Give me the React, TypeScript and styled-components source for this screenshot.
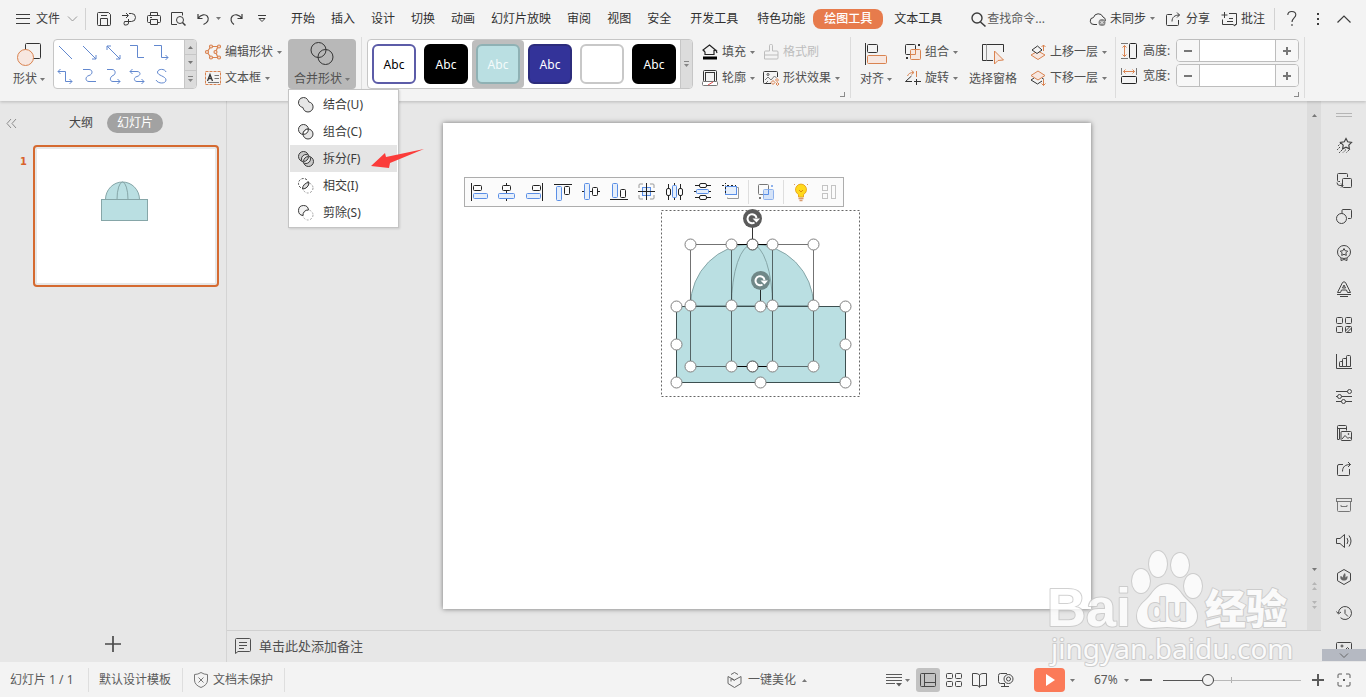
import React from "react";
import styled, { createGlobalStyle, css } from "styled-components";

const ORANGE = "#d98350";
const ORANGE_TINT = "#f7e7e0";
const BLUE = "#5a8fe6";
const BLUE_TINT = "#e6effb";
const SHAPE = "#badfe2";
const SHAPE_LINE = "#86a6a8";

const GlobalStyle = createGlobalStyle`
  *, *::before, *::after { box-sizing: border-box; }
  html, body { margin: 0; padding: 0; }
  body {
    font-family: "Noto Sans", "Noto Sans CJK SC", sans-serif;
    font-size: 12px;
    line-height: 16px;
    color: #505050;
    overflow: hidden;
  }
  button, input {
    font: inherit;
    color: inherit;
    background: none;
    border: 0;
    margin: 0;
    padding: 0;
  }
`;

/* ---------- frame ---------- */

const Window = styled.div`
  position: relative;
  display: flex;
  flex-direction: column;
  height: 100vh;
  background: #e7e7e7;
  white-space: nowrap;
`;

const Header = styled.header`
  position: relative;
  z-index: 2;
  background: #f3f3f3;
  box-shadow: 0 1px 3px rgba(0, 0, 0, 0.2);
`;

const Body = styled.div`
  flex: 1;
  min-height: 0;
  display: flex;
`;

const Svg = styled.svg`
  display: block;
  flex: none;
  fill: none;
  stroke: currentColor;
  overflow: visible;
`;

const CaretShape = styled(Svg)`
  fill: #777;
  stroke: none;
`;

const Caret = ({ up = false }: { up?: boolean }) => (
  <CaretShape width="5" height="3" viewBox="0 0 5 3">
    <path d={up ? "M0 3h5L2.500 0z" : "M0 0h5L2.500 3z"} />
  </CaretShape>
);

type IconProps = { w?: number; h?: number; children: React.ReactNode };
const Icon = ({ w = 16, h = 16, children }: IconProps) => (
  <Svg width={w} height={h} viewBox={`0 0 ${w} ${h}`} aria-hidden="true">
    {children}
  </Svg>
);

const Divider = styled.span<{ $gap: string }>`
  width: 1px;
  height: 22px;
  margin: ${(p) => p.$gap};
  background: #d2d2d2;
`;

/* ---------- title bar ---------- */

const TitleBar = styled.div`
  display: flex;
  align-items: center;
  height: 37px;
  padding-right: 9px;
  color: #3c3c3c;
`;

const FileButton = styled.button`
  display: flex;
  align-items: center;
  padding: 0 8px;
  margin-left: 8px;
  gap: 6px;
`;

const QuickButton = styled.button<{ $w?: number }>`
  display: flex;
  align-items: center;
  justify-content: ${(p) => (p.$w === 8 ? "flex-start" : "center")};
  width: ${(p) => p.$w ?? 25}px;
  height: 24px;
`;

const Tabs = styled.nav`
  display: flex;
  align-items: center;
  margin-left: 9px;
`;

const Tab = styled.button<{ $active?: boolean; $spaced?: boolean }>`
  height: 20px;
  padding: 0 8px;
  margin-left: ${(p) => (p.$spaced ? 3 : 0)}px;
  color: #303030;
  ${(p) =>
    p.$active &&
    css`
      padding: 0 11px;
      border-radius: 8px;
      background: #e77b4c;
      color: #fff;
      font-weight: 500;
    `}
`;

const Search = styled.label`
  display: flex;
  align-items: center;
  margin-left: 21px;
  gap: 1px;
`;

const SearchInput = styled.input`
  width: 72px;
  outline: none;
  &::placeholder {
    color: #5c5c5c;
    opacity: 1;
  }
`;

const Account = styled.div`
  display: flex;
  align-items: center;
  gap: 1px;
  margin-left: auto;
`;

const AccountButton = styled.button`
  display: flex;
  align-items: center;
  gap: 4px;
  padding: 0 5px;
`;

/* ---------- ribbon ---------- */

const Ribbon = styled.div`
  display: flex;
  height: 64px;
`;

const Group = styled.section<{ $pad: string; $gap?: number }>`
  position: relative;
  display: flex;
  align-items: flex-start;
  gap: ${(p) => p.$gap ?? 4}px;
  height: 61px;
  padding: ${(p) => p.$pad};
  border-right: 1px solid #dcdcdc;
`;

const CornerMark = styled.button`
  position: absolute;
  right: 5px;
  bottom: 1px;
  width: 5px;
  height: 5px;
  border: solid #8a8a8a;
  border-width: 0 1px 1px 0;
`;

const BigButton = styled.button<{ $pressed?: boolean; $w?: number }>`
  display: flex;
  flex-direction: column;
  align-items: center;
  gap: 5px;
  width: ${(p) => (p.$w ? `${p.$w}px` : "auto")};
  height: 50px;
  margin-top: 1px;
  padding: 3px 4px 0;
  border-radius: 4px;
  background: ${(p) => (p.$pressed ? "#b8b8b8" : "none")};
`;

const BigIcon = styled.span`
  display: flex;
  align-items: center;
  justify-content: center;
  height: 24px;
  color: #333;
`;

const BigLabel = styled.span`
  display: flex;
  align-items: center;
  gap: 3px;
`;

const Columns = styled.div`
  display: flex;
`;

const Column = styled.div`
  display: flex;
  flex-direction: column;
  margin-top: 1px;
`;

const Tool = styled.button<{ $off?: boolean }>`
  display: flex;
  align-items: center;
  gap: 4px;
  height: 26px;
  padding: 0 3px 0 5px;
  color: ${(p) => (p.$off ? "#bdbdbd" : "inherit")};
`;

const Gallery = styled.div`
  display: flex;
  height: 50px;
  margin-top: 1px;
  border: 1px solid #c6c6c6;
  border-radius: 4px;
  background: #fff;
  overflow: hidden;
`;

const LineGrid = styled.div`
  display: grid;
  grid-template-columns: repeat(5, 24px);
  grid-auto-rows: 24px;
  padding-right: 10px;
  color: #6288cf;
`;

const LineCell = styled.button`
  display: flex;
  align-items: center;
  justify-content: center;
  padding-right: 2px;
`;

const Stepper = styled.div`
  display: grid;
  width: 12px;
  border-left: 1px solid #c6c6c6;
  background: #dcdcdc;
`;

const StepperButton = styled.button`
  display: flex;
  align-items: center;
  justify-content: center;
  & + & {
    border-top: 1px solid #c6c6c6;
  }
`;

const Swatches = styled.div`
  display: flex;
  width: 312px;
`;

const SwatchCell = styled.button<{ $selected?: boolean }>`
  display: flex;
  align-items: center;
  justify-content: center;
  width: 52px;
  border-radius: 4px;
  background: ${(p) => (p.$selected ? "#bebebe" : "none")};
`;

const Swatch = styled.span<{ $bg: string; $line: string; $ink: string }>`
  width: 44px;
  height: 40px;
  border: 2px solid ${(p) => p.$line};
  border-radius: 6px;
  background: ${(p) => p.$bg};
  color: ${(p) => p.$ink};
  line-height: 38px;
`;

const MenuAnchor = styled.div`
  position: relative;
`;

const Menu = styled.div`
  position: absolute;
  top: 51px;
  left: 0;
  width: 111px;
  padding: 1px;
  border: 1px solid #c4c4c4;
  background: #fff;
  box-shadow: 1px 1px 2px rgba(0, 0, 0, 0.12);
`;

const MenuItem = styled.button<{ $hover?: boolean }>`
  position: relative;
  display: flex;
  align-items: center;
  gap: 9px;
  width: 100%;
  height: 27px;
  padding-left: 8px;
  color: #3a3a3a;
  background: ${(p) => (p.$hover ? "#e5e5e5" : "none")};
`;

const Pointer = styled(Svg)`
  position: absolute;
  top: 4px;
  left: 81px;
  fill: #fb3c3a;
  stroke: none;
`;

const SizeRows = styled.div`
  display: flex;
  flex-direction: column;
  gap: 2px;
  padding-top: 1px;
`;

const SizeRow = styled.div`
  display: flex;
  align-items: center;
  gap: 6px;
  height: 23px;
`;

const SizeLabel = styled.label`
  width: 27px;
`;

const Spin = styled.div`
  display: flex;
  width: 123px;
  height: 23px;
  border: 1px solid #bdbdbd;
  border-radius: 4px;
  background: #fff;
  overflow: hidden;
`;

const SpinButton = styled.button`
  display: flex;
  align-items: center;
  justify-content: center;
  width: 22px;
  background: #f7f7f7;
  color: #777;
`;

const SpinInput = styled.input`
  flex: 1;
  min-width: 0;
  border: solid #bdbdbd;
  border-width: 0 1px;
`;

/* ---------- slide list ---------- */

const SlidePanel = styled.aside`
  display: flex;
  flex-direction: column;
  flex: none;
  width: 227px;
  border-right: 1px solid #d4d4d4;
`;

const PanelHead = styled.div`
  display: flex;
  align-items: center;
  height: 44px;
  padding-left: 6px;
  color: #444;
`;

const Collapse = styled.button`
  width: 53px;
  color: #8c8c8c;
`;

const PanelTab = styled.button<{ $active?: boolean }>`
  height: 20px;
  padding: 0 10px;
  border-radius: 10px;
  background: ${(p) => (p.$active ? "#a2a2a2" : "none")};
  color: ${(p) => (p.$active ? "#fff" : "inherit")};
  & + & {
    margin-left: 4px;
  }
`;

const ThumbRow = styled.div`
  display: flex;
  flex: 1;
  align-items: flex-start;
`;

const ThumbNumber = styled.span`
  width: 33px;
  padding: 9px 6px 0 0;
  text-align: right;
  font: bold 11px/16px "DejaVu Sans Condensed", "DejaVu Sans", sans-serif;
  color: #d9622b;
`;

const Thumb = styled.button`
  width: 186px;
  padding: 2px;
  border: 2px solid #d56a30;
  border-radius: 4px;
`;

const ThumbDrawing = styled(Svg)`
  background: #fff;
`;

const AddSlide = styled.button`
  align-self: center;
  padding: 10px;
  color: #4a4a4a;
`;

/* ---------- canvas ---------- */

const Center = styled.main`
  display: flex;
  flex-direction: column;
  flex: 1;
  min-width: 0;
`;

const CanvasRow = styled.div`
  display: flex;
  flex: 1;
  min-height: 0;
`;

const Canvas = styled.div`
  display: flex;
  flex: 1;
  align-items: center;
  justify-content: center;
  min-width: 0;
`;

const Slide = styled.div`
  position: relative;
  flex: none;
  width: 648px;
  aspect-ratio: 4 / 3;
  background: #fff;
  box-shadow: 0 0 5px rgba(0, 0, 0, 0.5);
`;

const FloatBar = styled.div`
  position: absolute;
  top: 54px;
  left: 21px;
  display: flex;
  align-items: center;
  height: 30px;
  border: 1px solid #adadad;
  background: #fbfbfb;
  color: #222;
`;

const FloatButton = styled.button`
  display: flex;
  align-items: center;
  justify-content: center;
  width: 28px;
  height: 28px;
`;

const FloatSplit = styled.span`
  width: 1px;
  height: 24px;
  margin: 0 3px;
  background: #dedede;
`;

const Selection = styled(Svg)`
  position: absolute;
  top: 87px;
  left: 218px;
`;

const ScrollBar = styled.div`
  display: flex;
  flex-direction: column;
  align-items: center;
  width: 14px;
  padding: 13px 0 21px;
  background: #dcdcdc;
  color: #7c7c7c;
`;

const ScrollEnd = styled.div`
  display: flex;
  flex-direction: column;
  align-items: center;
  gap: 11px;
  margin-top: auto;
`;

const Notes = styled.div`
  display: flex;
  align-items: center;
  gap: 8px;
  height: 32px;
  padding: 0 0 2px 8px;
  border-top: 1px solid #d0d0d0;
  font-size: 13px;
  line-height: 18px;
`;

/* ---------- task pane icons ---------- */

const SideBar = styled.nav`
  position: relative;
  flex: none;
  display: flex;
  flex-direction: column;
  align-items: center;
  width: 45px;
  overflow: hidden;
  color: #444;
`;

const SideHandle = styled.span`
  flex: none;
  width: 16px;
  height: 4px;
  margin: 12px 0 10px;
  border: solid #b5b5b5;
  border-width: 1px 0;
`;

const SideButton = styled.button`
  flex: none;
  display: flex;
  align-items: center;
  justify-content: center;
  width: 36px;
  height: 36px;
`;

const SideMore = styled.button`
  position: absolute;
  right: 0;
  bottom: 1px;
  display: flex;
  align-items: center;
  justify-content: center;
  width: 44px;
  height: 12px;
  background: #b5b9c2;
  color: #666;
`;

/* ---------- status bar ---------- */

const StatusBar = styled.footer`
  display: flex;
  align-items: center;
  height: 35px;
  padding: 1px 15px 0 0;
  background: #f3f3f3;
  color: #5a5a5a;
`;

const StatusItem = styled.button<{ $w?: number }>`
  display: flex;
  align-items: center;
  gap: 4px;
  width: ${(p) => (p.$w ? `${p.$w}px` : "auto")};
  height: 24px;
  padding: 0 11px 0 10px;
  border-right: 1px solid #dedede;
`;

const Beautify = styled.button`
  display: flex;
  align-items: center;
  gap: 6px;
  margin-left: auto;
  margin-right: 79px;
`;

const Views = styled.div`
  display: flex;
  align-items: center;
  gap: 2px;
`;

const NotesToggle = styled.button`
  display: flex;
  align-items: center;
  gap: 3px;
  margin-right: 4px;
`;

const ViewButton = styled.button<{ $active?: boolean }>`
  display: flex;
  align-items: center;
  justify-content: center;
  width: 24px;
  height: 24px;
  border-radius: 3px;
  background: ${(p) => (p.$active ? "#c2c2c2" : "none")};
  color: #484848;
`;

const Play = styled.button`
  display: flex;
  align-items: center;
  gap: 5px;
  margin: 0 19px 0 16px;
`;

const PlayFace = styled.span`
  display: flex;
  align-items: center;
  justify-content: center;
  width: 31px;
  height: 24px;
  border-radius: 4px;
  background: #fb7a58;
`;

const Zoom = styled.div`
  display: flex;
  align-items: center;
  gap: 11px;
  margin-right: 13px;
`;

const ZoomValue = styled.button`
  display: flex;
  align-items: center;
  justify-content: space-between;
  width: 35px;
`;

const ZoomTrack = styled.span`
  position: relative;
  display: flex;
  &::before {
    content: "";
    position: absolute;
    left: 68px;
    top: 4px;
    width: 1px;
    height: 6px;
    background: #b0b0b0;
  }
`;

const ZoomSlider = styled.input`
  appearance: none;
  position: relative;
  width: 138px;
  height: 14px;
  background: linear-gradient(90deg, #555 32%, #b8b8b8 32%) center / 100% 1px no-repeat;
  &::-webkit-slider-thumb {
    appearance: none;
    width: 12px;
    height: 12px;
    border: 1px solid #444;
    border-radius: 50%;
    background: #f3f3f3;
  }
`;

const Watermark = styled.svg`
  position: absolute;
  right: 70px;
  bottom: 26px;
  z-index: 3;
  pointer-events: none;
  opacity: 0.8;
  fill: #fff;
  stroke: #c6c6c6;
  stroke-width: 2px;
  stroke-linejoin: round;
  paint-order: stroke;
`;

/* ---------- drawings ---------- */

const lineIcons: React.ReactNode[] = [
  <path d="M2 2l13 13" />,
  <path d="M2 2l13 13M15 11v4h-4" />,
  <path d="M2 2l13 13M15 11v4h-4M2 6V2h4" />,
  <path d="M1 1.500h7.500v12H15" />,
  <path d="M1 1.500h7.500v12H15M12.500 11l2.500 2.500-2.500 2.500" />,
  <path d="M1 3.500h7.500v10H15M12.500 11l2.500 2.500-2.500 2.500M3.500 1L1 3.500 3.500 6" />,
  <path d="M2 1.500h6c4 0 4 5 0 6s-4 6 0 6h7" />,
  <path d="M2 1.500h5c4 0 4 5 1 6s-4 6 0 6h7M12.500 11l2.500 2.500-2.500 2.500" />,
  <path d="M1 3.500h7c4 0 4 4 0 5s-3 5 0 5h7M12.500 11l2.500 2.500-2.500 2.500M3.500 1L1 3.500 3.500 6" />,
  <path d="M13 4C12 .5 5 .5 4.500 4s8.500 4 8.500 8-8 4-10 0" />,
];

const swatches = [
  { bg: "#fff", line: "#5c5ca8", ink: "#000", text: "Abc" },
  { bg: "#000", line: "#000", ink: "#fff", text: "Abc" },
  { bg: SHAPE, line: "#8fb1b4", ink: "#f4fbfb", text: "Abc", selected: true },
  { bg: "#333399", line: "#2c2c7c", ink: "#fff", text: "Abc" },
  { bg: "#fff", line: "#c8c8c8", ink: "#fff", text: "" },
  { bg: "#000", line: "#000", ink: "#fff", text: "Abc" },
];

const mergeItems: { label: string; hover?: boolean; icon: React.ReactNode }[] = [
  {
    label: "结合(U)",
    icon: (
      <path
        fill="#e6e6e6"
        d="M5.500 .5a5 5 0 0 0-3.600 8.500c.8.800 1.500 1 3 1.500.5 1.500.7 2.200 1.500 3a5 5 0 0 0 7.200-7.200c-.8-.8-1.500-1-3-1.500-.5-1.500-.8-2-1.500-2.800A5 5 0 0 0 5.500 .5z"
      />
    ),
  },
  {
    label: "组合(C)",
    icon: (
      <g>
        <circle cx="5.500" cy="5.500" r="5" fill="#e6e6e6" />
        <circle cx="10" cy="10" r="5" fill="#e6e6e6" />
        <path d="M5.100 10.400a5 5 0 0 1 5.300-5.300 5 5 0 0 1-5.300 5.300z" fill="#fff" />
      </g>
    ),
  },
  {
    label: "拆分(F)",
    hover: true,
    icon: (
      <g>
        <circle cx="5.500" cy="5.500" r="5" fill="#c9c9c9" />
        <circle cx="10.500" cy="10.500" r="5" fill="#c9c9c9" />
        <circle cx="8" cy="8" r="4.500" fill="#e5e5e5" />
        <path d="M5.500 10.500a5 5 0 0 1 5-5 5 5 0 0 1-5 5z" fill="#c9c9c9" />
      </g>
    ),
  },
  {
    label: "相交(I)",
    icon: (
      <g>
        <circle cx="5.500" cy="5.500" r="5" strokeDasharray="2 1.500" />
        <circle cx="10" cy="10" r="5" strokeDasharray="2 1.500" stroke="#999" />
        <path d="M4.500 11a6.500 6.500 0 0 1 6.500-6.500A6.500 6.500 0 0 1 4.500 11z" fill="#ddd" />
      </g>
    ),
  },
  {
    label: "剪除(S)",
    icon: (
      <g>
        <circle cx="10" cy="10" r="5" strokeDasharray="2 1.500" stroke="#aaa" />
        <path d="M5 10.500A5 5 0 1 1 10.500 5a5 5 0 0 0-5.500 5.500z" fill="#f2f2f2" />
      </g>
    ),
  },
];

const blue = { fill: BLUE_TINT, stroke: BLUE };
const alignIcons: [string, React.ReactNode][] = [
  ["左对齐", <g><path d="M1.500 0v18" /><rect x="3.500" y="2.500" width="8" height="5" rx="1" /><rect x="3.500" y="10.500" width="14" height="5" rx="1" {...blue} /></g>],
  ["水平居中", <g><path d="M8.500 0v2.500M8.500 7.500v3M8.500 15.500V18" /><rect x="4.500" y="2.500" width="8" height="5" rx="1" /><rect x=".5" y="10.500" width="16" height="5" rx="1" {...blue} /></g>],
  ["右对齐", <g><path d="M16.500 0v18" /><rect x="6.500" y="2.500" width="8" height="5" rx="1" /><rect x=".5" y="10.500" width="14" height="5" rx="1" {...blue} /></g>],
  ["靠上对齐", <g><path d="M0 1.500h18" /><rect x="2.500" y="3.500" width="5" height="14" rx="1" {...blue} /><rect x="10.500" y="3.500" width="5" height="8" rx="1" /></g>],
  ["垂直居中", <g><path d="M0 8.500h2.500M7.500 8.500h3M15.500 8.500H18" /><rect x="2.500" y=".5" width="5" height="16" rx="1" {...blue} /><rect x="10.500" y="4.500" width="5" height="8" rx="1" /></g>],
  ["靠下对齐", <g><path d="M0 16.500h18" /><rect x="2.500" y=".5" width="5" height="14" rx="1" {...blue} /><rect x="10.500" y="6.500" width="5" height="8" rx="1" /></g>],
  ["相对于幻灯片", <g><path d="M1 5V2q0-1 1-1h3M12 1h3q1 0 1 1v3M16 12v3q0 1-1 1h-3M5 16H2q-1 0-1-1v-3" stroke="#999" /><rect x="4.500" y="4.500" width="8" height="8" {...blue} /><path d="M8.500 0v17M0 8.500h17" /></g>],
  ["横向分布", <g><path d="M2.500 1v4M2.500 12v5M8.500 0v2M8.500 15v2M14.500 1v4M14.500 12v5" /><rect x=".5" y="5.500" width="4" height="7" rx="1.500" /><rect x="6.500" y="2.500" width="4" height="12" rx="1" {...blue} /><rect x="12.500" y="5.500" width="4" height="7" rx="1.500" /></g>],
  ["纵向分布", <g><path d="M1 2.500h4M12 2.500h5M0 8.500h2M15 8.500h2M1 14.500h4M12 14.500h5" /><rect x="5.500" y=".5" width="7" height="4" rx="1.500" /><rect x="2.500" y="6.500" width="12" height="4" rx="1" {...blue} /><rect x="5.500" y="12.500" width="7" height="4" rx="1.500" /></g>],
  ["等尺寸", <g><path d="M0 2.500h2M3.500 2.500V4M3.500 0v1" /><path d="M5.500 14.500v1h11v-11h-2" stroke="#999" /><rect x="3.500" y="3.500" width="11" height="8" {...blue} /><path d="M3.500 4v8M5 2.500h9" strokeDasharray="2 2" /></g>],
];

const sideIcons: [string, React.ReactNode][] = [
  ["动画", <g><path d="M10 1.500l1.700 3.300 3.800.6-2.700 2.700.6 3.800L10 10.200l-3.400 1.700.6-3.800L4.500 5.400l3.800-.6z" strokeWidth="1.200" /><path d="M5 6L2 9M4 10l-3 3M6 13l-3 3M10 12.500L7 15.500M13.500 12.500l-3 3" strokeDasharray="2 1" /></g>],
  ["切换", <g><path d="M4 8.500H2.500q-1 0-1-1v-6q0-1 1-1h8q1 0 1 1V4M1 9.500q0 3 3 3h3M5 10.500l2 2-2 2" /><rect x="6.500" y="5.500" width="9" height="9" rx="1" /></g>],
  ["对象", <g><path d="M6 5V1.500q0-1 1-1h7.500q1 0 1 1v7q0 1-1 1H12" /><circle cx="5.500" cy="9.500" r="5" /></g>],
  ["设计", <g><circle cx="8" cy="7" r="6.500" /><path d="M8 3.500l1.200 2.300 2.500.3-1.800 1.800.4 2.500L8 9.300l-2.300 1.100.4-2.500-1.800-1.800 2.500-.3zM5 13v2.500l3-1 3 1V13" /></g>],
  ["艺术字", <g><path d="M1.500 11.500L6.500 1.500q1.500-1.500 3 0l5 10h-3l-1-2.500h-5l-1 2.500zM6.500 7L8 4l1.500 3zM1 13.500h14M4 15.500h8" /></g>],
  ["模板", <g><rect x=".5" y=".5" width="6" height="6" rx="1" /><rect x="9.500" y=".5" width="6" height="6" rx="1" /><rect x=".5" y="9.500" width="6" height="6" rx="1" /><rect x="9.500" y="9.500" width="6" height="6" rx="1" /><path d="M9.500 14l4.500-4.500M11 15.500l4.500-4.500" /></g>],
  ["图表", <g><path d="M.5 1v14.500H16" /><path d="M3.500 13.500V9.500q0-1 1-1h2v5zM6.500 13.500V6.500q0-1 1-1h3v8zM10.500 13.500V3.500q0-1 1-1h2q1 0 1 1v10z" /></g>],
  ["属性", <g><path d="M0 2.500h11.500M0 7.500h1.500M5.500 7.500H16M0 12.500h5.500M9.500 12.500H16" /><circle cx="13.500" cy="2.500" r="2" /><circle cx="3.500" cy="7.500" r="2" /><circle cx="7.500" cy="12.500" r="2" /></g>],
  ["图片", <g><path d="M3 14.500H1.500V1.500M1.500 1.500q0-1 1-1h7q1 0 1 1v4M1.500 3.500h9M3.500 3.500v11" /><rect x="5" y="6.500" width="10.500" height="9" rx="1" /><path d="M6 14l3-3.500 3 3 1.500-1.500 2 2" /><circle cx="12.500" cy="9" r=".5" /></g>],
  ["分享", <g><path d="M7 3.500H3q-1.500 0-1.500 1.500v8.500q0 1 1 1h10q1 0 1-1V8" /><path d="M6.500 10.500c0-5 3-7 8-7M12 1l2.500 2.500L12 6" /></g>],
  ["备份", <g stroke="#777"><rect x=".5" y="1.500" width="15" height="3" /><path d="M1.500 4.500v9q0 1 1 1h11q1 0 1-1v-9M5 8v1.500h6V8" /></g>],
  ["声音", <g><path d="M.5 5.500H4L8.500 1.500v13L4 10.500H.5zM11 5q2 3 0 6M13 2.500q4 5.500 0 11" /></g>],
  ["稻壳", <g><path d="M8 .5l6.500 3.800v7.400L8 15.500l-6.500-3.800V4.300z" /><path d="M8 11.500c-3.500 0-4-2.500-3.500-4.500 2 .5 2.500 1.500 2.700 2.500C6.500 7 7.500 5 9 4c.8 2 .7 3.500 0 5 .5-1 1.300-1.500 2.500-2 .3 2.500-.5 4.500-3.500 4.500z" fill="#666" stroke="none" /></g>],
  ["历史", <g><path d="M2.500 8a6.500 6.500 0 1 1 2 4.700M.5 6.500l2 2.500 2.500-2" /><path d="M9 4.500v4l3 3" /></g>],
  ["图库", <g><rect x=".5" y="1.500" width="15" height="12" rx="1" /><circle cx="6" cy="5" r="1" /><path d="M10 8l1.500-1.500L14 9" /></g>],
];

const handles: [number, number][] = [
  [29.5, 34.5], [70.5, 34.5], [111.5, 34.5], [152.5, 34.5], [91.5, 34.5],
  [29.5, 95.5], [70.5, 95.5], [111.5, 95.5], [152.5, 95.5],
  [29.5, 156.5], [70.5, 156.5], [111.5, 156.5], [152.5, 156.5], [91.5, 156.5],
  [15.5, 96.5], [99.5, 96.5], [184.5, 96.5], [15.5, 134.5], [184.5, 134.5],
  [15.5, 172.5], [99.5, 172.5], [184.5, 172.5],
];

const RotateHandle = ({ x, y, fill }: { x: number; y: number; fill: string }) => (
  <g>
    <circle cx={x} cy={y} r="9.500" fill={fill} stroke="none" />
    <path d={`M${x + 2} ${y + 4}a4.500 4.500 0 1 1 2-4.500`} stroke="#fff" strokeWidth="2" />
    <path d={`M${x} ${y}h7.500l-3.500 4z`} fill="#fff" stroke="none" />
  </g>
);

const Shapes = () => (
  <Selection width="199" height="187" viewBox="0 0 199 187">
    <rect x=".5" y=".5" width="198" height="186" stroke="#666" strokeDasharray="2 2" />
    <path d="M29.500 95.500a61.500 61.500 0 0 1 123 0z" fill={SHAPE} stroke={SHAPE_LINE} />
    <path d="M70.500 95.500a20.500 61 0 0 1 41 0" stroke={SHAPE_LINE} />
    <rect x="15.500" y="96.500" width="169" height="76" fill={SHAPE} stroke="#3d4f50" />
    <g stroke="#000" strokeOpacity=".55">
      <rect x="29.500" y="34.500" width="123" height="122" />
      <rect x="70.500" y="34.500" width="41" height="122" />
      <path d="M70.500 34.500h41M70.500 156.500h41" strokeOpacity="1" />
      <path d="M91.500 14v16M99.500 80v16" strokeOpacity=".8" />
    </g>
    <RotateHandle x={91.5} y={8.5} fill="#5b5b5b" />
    <RotateHandle x={99.5} y={70.5} fill="#708888" />
    {handles.map(([x, y]) => (
      <circle key={`${x}-${y}`} cx={x} cy={y} r="5.500" fill="#fff" stroke={x === 91.5 ? "#444" : "#808080"} />
    ))}
  </Selection>
);

/* ---------- sections ---------- */

const Title = () => (
  <TitleBar>
    <FileButton>
      <Icon w={14} h={10}><path d="M0 .5h14M0 4.500h14M0 9.500h14" /></Icon>
      文件
      <Icon w={11} h={6}><path d="M2 .5l4.500 4.500L11 .5" stroke="#999" /></Icon>
    </FileButton>
    <Divider $gap="0 5px 0 0" />
    <QuickButton aria-label="保存"><Icon w={14} h={14}><path d="M.5 12.500v-11q0-1 1-1h10l2 2v10q0 1-1 1h-11q-1 0-1-1zM3.500 13V6.500h7V13M4 3.500h6" /></Icon></QuickButton>
    <QuickButton aria-label="输出"><Icon w={14} h={14}><path d="M0 3.500h6M4 1l2.500 2.500L4 6M7 1.500h2.500a4 4 0 0 1 0 8H4M6.500 7v4q0 2-2.500 2H2.500q-1-1.500 0-3.500H6" /></Icon></QuickButton>
    <QuickButton aria-label="打印"><Icon w={14} h={14}><path d="M3.500 3.500v-3h7v3M3 10.500H1.500q-1 0-1-1v-5q0-1 1-1h11q1 0 1 1v5q0 1-1 1H11M3.500 7.500h7v5h-7zM3 5.500h2" /></Icon></QuickButton>
    <QuickButton aria-label="预览"><Icon w={15} h={14}><path d="M6 12.500H.5V.5h11v3" /><circle cx="9" cy="8" r="3.500" /><path d="M11.500 10.500l3 3" strokeWidth="1.500" /></Icon></QuickButton>
    <QuickButton aria-label="撤销"><Icon w={13} h={12}><path d="M1 1v4.500h4.500M1.200 5.200C4 1 8.500 1 10.300 3.200c2.200 3 .7 6.300-3.800 8.300" strokeWidth="1.200" /></Icon></QuickButton>
    <QuickButton $w={8} aria-label="撤销列表"><Caret /></QuickButton>
    <QuickButton aria-label="恢复"><Icon w={13} h={12}><path d="M12 1v4.500H7.500M11.800 5.200C9 1 4.500 1 2.200 3.200 0 6 1 9.500 4 11.500" strokeWidth="1.200" /></Icon></QuickButton>
    <QuickButton aria-label="更多"><Icon w={8} h={7}><path d="M0 .5h8M1 3.500h6l-3 3z" /></Icon></QuickButton>
    <Tabs>
      {["开始", "插入", "设计", "切换", "动画", "幻灯片放映", "审阅", "视图", "安全"].map((t) => (
        <Tab key={t}>{t}</Tab>
      ))}
      <Tab $spaced>开发工具</Tab>
      <Tab $spaced>特色功能</Tab>
      <Tab $active>绘图工具</Tab>
      <Tab $spaced>文本工具</Tab>
    </Tabs>
    <Search>
      <Icon w={15}><circle cx="6" cy="7" r="5" strokeWidth="1.400" /><path d="M9.500 11l5 4.500" strokeWidth="1.600" /></Icon>
      <SearchInput aria-label="查找命令" placeholder="查找命令..." />
    </Search>
    <Account>
      <AccountButton>
        <Icon w={16} h={14}><path d="M7 12.500H4A3.500 3.500 0 0 1 3.500 5.500 5 5 0 0 1 13 5q3 1 2.300 4" /><circle cx="12" cy="10.500" r="3.500" fill="#8a8a8a" stroke="none" /><path d="M10.500 9l3 3M13.500 9l-3 3" stroke="#f3f3f3" /></Icon>
        未同步
        <Caret />
      </AccountButton>
      <AccountButton>
        <Icon w={16} h={14}><path d="M6 2.500H1.500q-1 0-1 1v9q0 1 1 1h10q1 0 1-1V8" /><path d="M6 9.500c0-4.500 3-6.500 7.500-6.500M11 .5L13.500 3 11 5.500" /></Icon>
        分享
      </AccountButton>
      <AccountButton>
        <Icon w={16} h={14}><path d="M3.500 0v6M.5 3h6M8 1.500h7.500v11h-1.500v1.500l-2-1.500H1.500V7.500M6 9.500h6M8 6.500h4" /></Icon>
        批注
      </AccountButton>
      <Divider $gap="0 4px 0 3px" />
    </Account>
    <QuickButton $w={26} aria-label="帮助"><Icon w={10} h={15}><path d="M.8 4q0-3.500 4-3.500t4 3.300c0 3-3.800 3.200-3.800 7.200M5 13v2" strokeWidth="1.100" /></Icon></QuickButton>
    <QuickButton $w={26} aria-label="选项"><Icon w={2} h={14}><path d="M0 2h2M0 7h2M0 12h2" strokeWidth="2" /></Icon></QuickButton>
    <QuickButton $w={26} aria-label="收起功能区"><Icon w={14} h={8}><path d="M.5 7.500L7 1l6.500 6.500" strokeWidth="1.200" /></Icon></QuickButton>
  </TitleBar>
);

const orange = { fill: ORANGE_TINT, stroke: ORANGE };

const ExpandMark = () => (
  <Icon w={5} h={6}>
    <path d="M0 .5h5" stroke="#858585" />
    <path d="M0 3h5L2.500 6z" fill="#858585" stroke="none" />
  </Icon>
);

const ShapeTools = () => (
  <Group $pad="1px 5px 0 8px" $gap={3}>
    <BigButton $w={42}>
      <BigIcon><Icon w={24} h={24}><rect x="8.500" y="1.500" width="15" height="15" rx="1" /><circle cx="8.500" cy="15.500" r="8" {...orange} /></Icon></BigIcon>
      <BigLabel>形状<Caret /></BigLabel>
    </BigButton>
    <Gallery>
      <LineGrid>
        {lineIcons.map((d, i) => (
          <LineCell key={i} aria-label={`线条 ${i + 1}`}><Icon>{d}</Icon></LineCell>
        ))}
      </LineGrid>
      <Stepper>
        <StepperButton aria-label="上一行"><Caret up /></StepperButton>
        <StepperButton aria-label="下一行"><Caret /></StepperButton>
        <StepperButton aria-label="展开"><ExpandMark /></StepperButton>
      </Stepper>
    </Gallery>
    <Column>
      <Tool>
        <Icon><g stroke={ORANGE} strokeWidth="1.200"><path d="M6 2.500L2 8l4 5.500M8 2.500h5L10.500 8l2.500 5.500H8" /><circle cx="6" cy="2.500" r="1.500" {...orange} /><circle cx="14" cy="2.500" r="1.500" {...orange} /><circle cx="2" cy="8" r="1.500" {...orange} /><circle cx="10.500" cy="8" r="1.500" {...orange} /><circle cx="6" cy="13.500" r="1.500" {...orange} /><circle cx="14" cy="13.500" r="1.500" {...orange} /></g></Icon>
        编辑形状
        <Caret />
      </Tool>
      <Tool>
        <Icon><rect x=".5" y="1.500" width="15" height="13" stroke={ORANGE} strokeDasharray="3 1" /><path d="M2.500 11L5 4.500 7.500 11M3.500 8.500h3" strokeWidth="1.300" stroke="#333" /><path d="M9.500 5.500H14M9.500 8.500H14M3 12.500h11" stroke="#777" /></Icon>
        文本框
        <Caret />
      </Tool>
    </Column>
    <MenuAnchor>
      <BigButton $pressed $w={68}>
        <BigIcon><Icon w={24} h={24}><circle cx="8.500" cy="8" r="7.500" /><circle cx="15.500" cy="15" r="7.500" /></Icon></BigIcon>
        <BigLabel>合并形状<Caret /></BigLabel>
      </BigButton>
      <Menu>
        {mergeItems.map((m) => (
          <MenuItem key={m.label} $hover={m.hover}>
            <Icon>{m.icon}</Icon>
            {m.label}
            {m.hover && (
              <Pointer width="53" height="19" viewBox="0 0 53 19">
                <path d="M0 17L14 4l1 4L53 0 19 14l-1 5z" />
              </Pointer>
            )}
          </MenuItem>
        ))}
      </Menu>
    </MenuAnchor>
  </Group>
);

const StyleTools = () => (
  <Group $pad="1px 7px 0 5px">
    <Gallery>
      <Swatches>
        {swatches.map((s, i) => (
          <SwatchCell key={i} $selected={s.selected} aria-label={`样式 ${i + 1}`}>
            <Swatch $bg={s.bg} $line={s.line} $ink={s.ink}>{s.text}</Swatch>
          </SwatchCell>
        ))}
      </Swatches>
      <Stepper>
        <StepperButton aria-label="更多样式"><ExpandMark /></StepperButton>
      </Stepper>
    </Gallery>
    <Columns>
      <Column>
        <Tool>
          <Icon><path d="M3 10.500V8L1 6l6.500-5L14 6.500h-2v4zM2 7h1M14 6l1 3" stroke="#222" strokeWidth="1.200" /><path d="M1 14h14" stroke="#000" strokeWidth="3" /></Icon>
          填充
          <Caret />
        </Tool>
        <Tool>
          <Icon><rect x="1.500" y=".5" width="13" height="11" rx="1" stroke="#333" /><rect x="3.500" y="2.500" width="9" height="9" stroke="#333" /><rect x=".5" y="11.500" width="15" height="4" rx="1" fill="#fff" stroke="#777" /><path d="M6 15l5-3" stroke="#e05050" /></Icon>
          轮廓
          <Caret />
        </Tool>
      </Column>
      <Column>
        <Tool $off>
          <Icon><path d="M6.500 7V1.500q0-1 1-1h1q1 0 1 1V7H14q1 0 1 1v6q0 1-1 1H1.500V8q0-1 1-1zM1.500 11H15" /></Icon>
          格式刷
        </Tool>
        <Tool>
          <Icon><path d="M8 13.500H1.500q-1 0-1-1v-10q0-1 1-1h12q1 0 1 1V7" stroke="#333" /><path d="M2 10l3-3 3 3 3.500-4 2 2M3 13l2-2" stroke="#777" /><circle cx="5" cy="4.500" r="1" /><path d="M10 10.500l2 2-2 2-2-2zM14 8.500l1.500 1.500-1.500 1.500-1.500-1.500zM14.500 12.500l1.500 1.500-1.500 1.500-1.500-1.500z" {...orange} /></Icon>
          形状效果
          <Caret />
        </Tool>
      </Column>
    </Columns>
    <CornerMark aria-label="形状样式设置" />
  </Group>
);

const ArrangeTools = () => (
  <Group $pad="1px 5px 0">
    <BigButton>
      <BigIcon><Icon w={22} h={22}><path d="M.5 0v22" /><rect x="2.500" y="1.500" width="10" height="8" rx="1" /><rect x="2.500" y="12.500" width="19" height="8" rx="1" {...orange} /></Icon></BigIcon>
      <BigLabel>对齐<Caret /></BigLabel>
    </BigButton>
    <Column>
      <Tool>
        <Icon><rect x=".5" y=".5" width="10" height="10" rx="1" stroke="#333" /><rect x="5.500" y="5.500" width="10" height="10" rx="1" {...orange} /><path d="M5.500 10.500h5v-5" stroke={ORANGE} /><path d="M13 1h2M1 14h2" strokeWidth="2" stroke="#333" /></Icon>
        组合
        <Caret />
      </Tool>
      <Tool>
        <Icon><path d="M7 11.500H.5L6.500 6M9 11.500h7M11.500 9v6" stroke="#333" /><path d="M2.500 6c1-2.500 3-3.500 6-3.500M6.500 .5l2.500 2-2.500 2M11.500 1v6" stroke={ORANGE} /></Icon>
        旋转
        <Caret />
      </Tool>
    </Column>
    <BigButton>
      <BigIcon><Icon w={24} h={22}><path d="M12 17.500H1.500v-16h21V9" /><path d="M5.500 1.500v16" stroke="#999" /><path d="M13.500 8v13l3.500-3.500 5.500-.5z" {...orange} /></Icon></BigIcon>
      <BigLabel>选择窗格</BigLabel>
    </BigButton>
    <Column>
      <Tool>
        <Icon><path d="M1 11l7-4 7 4-7 4.500z" {...orange} /><path d="M2 6l5.500-4L12 6 7 9.500z" fill="#f3f3f3" stroke="#333" /><path d="M13.500 7V1M11.500 3l2-2 2 2" stroke={ORANGE} /></Icon>
        上移一层
        <Caret />
      </Tool>
      <Tool>
        <Icon><path d="M1 10l6.500 4L12 11" stroke="#333" /><path d="M1 10l3-2M12 8l2 1.500" stroke="#333" /><path d="M1 5.500l7-4.500 7 4.500L8 10z" {...orange} /><path d="M13.500 9.500v6M11.500 13.500l2 2 2-2" stroke={ORANGE} /></Icon>
        下移一层
        <Caret />
      </Tool>
    </Column>
  </Group>
);

const SpinBox = ({ id }: { id: string }) => (
  <Spin>
    <SpinButton aria-label="减小"><Icon w={8} h={8}><path d="M0 4h8" strokeWidth="2" /></Icon></SpinButton>
    <SpinInput id={id} />
    <SpinButton aria-label="增大"><Icon w={8} h={8}><path d="M0 4h8M4 0v8" strokeWidth="2" /></Icon></SpinButton>
  </Spin>
);

const SizeTools = () => (
  <Group $pad="1px 5px 0">
    <SizeRows>
      <SizeRow>
        <Icon><path d="M0 .5h7M0 15.500h7" stroke="#777" /><path d="M3.500 2.500v11M1.500 4.500l2-2 2 2M1.500 11.500l2 2 2-2" stroke={ORANGE} /><rect x="8.500" y=".5" width="7" height="15" rx="1" stroke="#222" /></Icon>
        <SizeLabel htmlFor="shape-height">高度:</SizeLabel>
        <SpinBox id="shape-height" />
      </SizeRow>
      <SizeRow>
        <Icon><path d="M.5 0v7M15.500 0v7" stroke="#777" /><path d="M2.500 3.500h11M4.500 1.500l-2 2 2 2M11.500 1.500l2 2-2 2" stroke={ORANGE} /><rect x=".5" y="8.500" width="15" height="7" rx="1" stroke="#222" /></Icon>
        <SizeLabel htmlFor="shape-width">宽度:</SizeLabel>
        <SpinBox id="shape-width" />
      </SizeRow>
    </SizeRows>
    <CornerMark aria-label="大小设置" />
  </Group>
);

const Slides = () => (
  <SlidePanel>
    <PanelHead>
      <Collapse aria-label="收起"><Icon w={11} h={9}><path d="M5 0L1 4.500 5 9M10 0L6 4.500 10 9" /></Icon></Collapse>
      <PanelTab>大纲</PanelTab>
      <PanelTab $active>幻灯片</PanelTab>
    </PanelHead>
    <ThumbRow>
      <ThumbNumber>1</ThumbNumber>
      <Thumb aria-label="幻灯片 1">
        <ThumbDrawing width="178" height="134" viewBox="0 0 178 134">
          <path d="M68.500 50.500a17 17.500 0 0 1 34 0z" fill={SHAPE} stroke={SHAPE_LINE} />
          <path d="M80 50.500a5.500 17.500 0 0 1 11 0" stroke={SHAPE_LINE} />
          <rect x="64.500" y="50.500" width="46" height="21" fill={SHAPE} stroke={SHAPE_LINE} />
        </ThumbDrawing>
      </Thumb>
    </ThumbRow>
    <AddSlide aria-label="新建幻灯片"><Icon><path d="M0 8h16M8 0v16" strokeWidth="1.700" /></Icon></AddSlide>
  </SlidePanel>
);

const Workspace = () => (
  <Center>
    <CanvasRow>
      <Canvas>
        <Slide>
          <FloatBar>
            {alignIcons.map(([name, d]) => (
              <FloatButton key={name} aria-label={name}><Icon w={18} h={18}>{d}</Icon></FloatButton>
            ))}
            <FloatSplit />
            <FloatButton aria-label="组合"><Icon w={18} h={18}><rect x="1.500" y="1.500" width="10" height="10" rx="1" stroke="#777" /><rect x="6.500" y="6.500" width="10" height="10" rx="1" fill="#d5e3f8" stroke="#8fb2ec" /><path d="M6.500 11.500h5v-5" stroke={BLUE} /><path d="M14 3h2" stroke="#8fb2ec" strokeWidth="2" /><path d="M2 15h2" stroke="#777" strokeWidth="2" /></Icon></FloatButton>
            <FloatSplit />
            <FloatButton aria-label="智能推荐"><Icon w={14} h={18}><path d="M4.500 14v-2.500a5.500 5.500 0 1 1 5 0V14z" fill="#ffd91c" stroke="#e9a820" /><path d="M4.500 15.500h5M5.500 17.500h3" stroke="#d99a6c" strokeWidth="1.500" /><path d="M5 7l2 2 2-2" stroke="#d98a10" /><path d="M0 1l1 1M14 1l-1 1" stroke="#d99a6c" /></Icon></FloatButton>
            <FloatButton aria-label="版式"><Icon w={16} h={16}><g stroke="#c4c4c4"><rect x="1.500" y="1.500" width="5" height="5" /><rect x="1.500" y="9.500" width="5" height="5" /><rect x="10.500" y="1.500" width="4" height="13" /></g></Icon></FloatButton>
          </FloatBar>
          <Shapes />
        </Slide>
      </Canvas>
      <ScrollBar>
        <Caret up />
        <ScrollEnd>
          <Caret />
          <Icon w={5} h={8}><path d="M0 3h5L2.500 0zM0 8h5L2.500 5z" fill="#b5b5b5" stroke="none" /></Icon>
          <Icon w={5} h={8}><path d="M0 0h5L2.500 3zM0 5h5L2.500 8z" fill="#b5b5b5" stroke="none" /></Icon>
        </ScrollEnd>
      </ScrollBar>
    </CanvasRow>
    <Notes>
      <Icon><path d="M.5 15.500V1.500q0-1 1-1h13q1 0 1 1v11q0 1-1 1H3zM4 4.500h8M4 7.500h8M4 10.500h5" /></Icon>
      单击此处添加备注
    </Notes>
  </Center>
);

const TaskPanes = () => (
  <SideBar>
    <SideHandle />
    {sideIcons.map(([name, d]) => (
      <SideButton key={name} aria-label={name}><Icon>{d}</Icon></SideButton>
    ))}
    <SideMore aria-label="更多窗格"><Icon w={8} h={5}><path d="M0 .5l4 4 4-4" /></Icon></SideMore>
  </SideBar>
);

const Status = () => (
  <StatusBar>
    <StatusItem $w={89}>幻灯片 1 / 1</StatusItem>
    <StatusItem>默认设计模板</StatusItem>
    <StatusItem>
      <Icon><path d="M8 .5q3 2 6.500 2V8q0 5-6.500 7.500Q1.500 13 1.500 8V2.500q3.500 0 6.500-2zM5.500 5.500l5 5M10.500 5.500l-5 5" stroke="#777" /></Icon>
      文档未保护
    </StatusItem>
    <Beautify>
      <Icon w={15}><path d="M1 4.500v7l6.500 4 6.500-4v-7M1 4.500L7.500 8 14 4.500M4 2.500L7.500 .5 11 2.500M4 9.500v-3l3.500 2" stroke="#666" /></Icon>
      一键美化
      <Caret up />
    </Beautify>
    <Views>
      <NotesToggle aria-label="备注"><Icon><path d="M0 2.500h16M0 5.500h16M0 8.500h16M0 11.500h9" /><path d="M10 11h6l-3 3.500z" fill="currentColor" stroke="none" /></Icon><Caret /></NotesToggle>
      <ViewButton $active aria-label="普通视图"><Icon w={16} h={14}><rect x=".5" y=".5" width="15" height="13" rx="1" /><path d="M4.500 .5v13M4.500 9.500h11" /></Icon></ViewButton>
      <ViewButton aria-label="幻灯片浏览"><Icon w={16} h={14}><rect x=".5" y=".5" width="6" height="5" rx="1" /><rect x="9.500" y=".5" width="6" height="5" rx="1" /><rect x=".5" y="8.500" width="6" height="5" rx="1" /><rect x="9.500" y="8.500" width="6" height="5" rx="1" /></Icon></ViewButton>
      <ViewButton aria-label="阅读视图"><Icon w={16} h={14}><path d="M7.500 2v12M7.500 2Q6 .5 4 .5H.5v12H5q2 0 2.500 2 .5-2 2.500-2h4.500V.5H11Q9 .5 7.500 2z" /></Icon></ViewButton>
      <ViewButton aria-label="演讲者视图"><Icon w={16} h={14}><path d="M7 10.500H2.500q-2 0-2-2v-6q0-2 2-2H9M3 13.500h8M6.500 10.500v3" /><circle cx="10.500" cy="6" r="4.500" /><circle cx="10.500" cy="6" r="2" /></Icon></ViewButton>
    </Views>
    <Play aria-label="播放">
      <PlayFace><Icon w={10} h={12}><path d="M1 0v12l9-6z" fill="#fff" stroke="none" /></Icon></PlayFace>
      <Caret />
    </Play>
    <Zoom>
      <ZoomValue>67%<Caret /></ZoomValue>
      <button aria-label="缩小"><Icon w={12} h={12}><path d="M0 6h12" strokeWidth="2" /></Icon></button>
      <ZoomTrack><ZoomSlider type="range" aria-label="缩放" defaultValue={31} /></ZoomTrack>
      <button aria-label="放大"><Icon w={12} h={12}><path d="M0 6h12M6 0v12" strokeWidth="2" /></Icon></button>
    </Zoom>
    <button aria-label="适应窗口"><Icon w={14} h={14}><path d="M1 5V2q0-1 1-1h3M9 1h3q1 0 1 1v3M13 9v3q0 1-1 1H9M5 13H2q-1 0-1-1V9" /><path d="M6 7h2" strokeWidth="2" /></Icon></button>
  </StatusBar>
);

const BaiduMark = () => (
  <Watermark width="250" height="122" viewBox="0 0 250 122">
    <text x="1" y="77" fontFamily="Liberation Sans, sans-serif" fontWeight="700" fontSize="54">Bai</text>
    <ellipse cx="95" cy="32" rx="9" ry="12" />
    <ellipse cx="112" cy="15" rx="9" ry="13" />
    <ellipse cx="134" cy="16" rx="9" ry="12" />
    <ellipse cx="147" cy="37" rx="9" ry="12" />
    <path d="M121 35c-11 0-14 9-20 15-6 5-10 10-10 17 0 8 6 12 14 12 6 0 10-1 16-1s10 1 16 1c9 0 14-5 14-12 0-8-6-12-11-17-6-6-9-15-19-15z" />
    <text x="101" y="72" fontFamily="Liberation Sans, sans-serif" fontWeight="700" fontSize="33" fill="#e9e9e9">du</text>
    <text x="159" y="75" fontFamily="Noto Sans CJK SC, sans-serif" fontWeight="900" fontSize="41">经验</text>
    <text x="5" y="110" fontFamily="Noto Sans, sans-serif" fontSize="28">jingyan.baidu.com</text>
  </Watermark>
);

export default function App() {
  return (
    <Window>
      <GlobalStyle />
      <Header>
        <Title />
        <Ribbon>
          <ShapeTools />
          <StyleTools />
          <ArrangeTools />
          <SizeTools />
        </Ribbon>
      </Header>
      <Body>
        <Slides />
        <Workspace />
        <TaskPanes />
      </Body>
      <Status />
      <BaiduMark />
    </Window>
  );
}
